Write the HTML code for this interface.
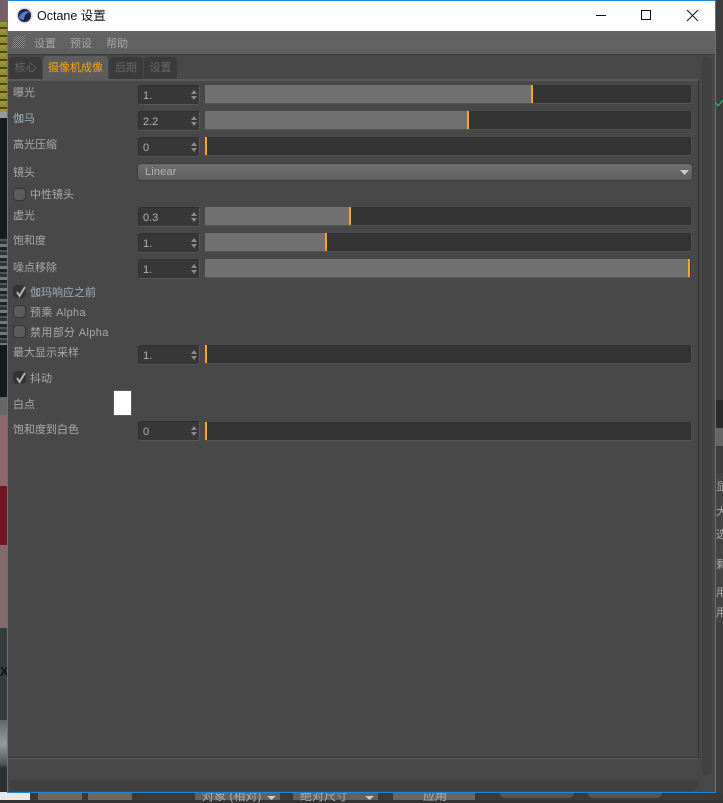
<!DOCTYPE html>
<html lang="zh"><head><meta charset="utf-8"><title>Octane 设置</title>
<style>
html,body{margin:0;padding:0;background:#333}
body{width:723px;height:800px;position:relative;overflow:hidden;font:11px/14px "Liberation Sans","Noto Sans CJK SC",sans-serif;color:#aaa}
div,span{position:absolute;box-sizing:border-box;white-space:nowrap}
svg{position:absolute;overflow:visible}
.l{left:13px;height:16px;line-height:16px}
.f{left:138px;width:62px;height:20px;background:#373737;border:1px solid #2f2f2f;border-right-color:#585858;border-bottom-color:#585858;border-radius:3px;padding-left:4px;line-height:20px;color:#adb4b8}
.f:after{content:"";position:absolute;right:2px;top:4px;width:0;height:0;border:3px solid transparent;border-bottom:4px solid #8a8a8a;border-top:0}
.f:before{content:"";position:absolute;right:2px;top:10px;width:0;height:0;border:3px solid transparent;border-top:4px solid #8a8a8a;border-bottom:0}
.s{left:205px;width:487px;height:19px;background:#333;border-radius:2px;border-right:1px solid #4f4f4f;border-bottom:1px solid #555}
.b{left:0;top:0;height:18px;background:#717171}
.m{top:0;width:2px;height:18px;background:#f5a81c}
.c{left:13px;width:13px;height:13px;border-radius:4px;background:#5c5c5c;border:1px solid #353535}
.c.k{background:#333}
.c svg{left:1px;top:0}
.t{top:57px;height:22px;background:#3b3b3b;border-radius:4px 4px 0 0;color:#666;line-height:23px;text-align:center}
.p{left:30px;height:16px;line-height:16px}
.a{letter-spacing:.35px}
.u{color:#b0b0b0;top:789px;height:14px;line-height:14px;font-size:12px;text-align:center}
</style></head><body>

<!-- background behind the window -->
<div style="left:0;top:0;width:7px;height:22px;background:#7a5c66"></div>
<div style="left:0;top:22px;width:7px;height:90px;background:repeating-linear-gradient(0deg,#8f9a30 0 3px,#7a2c2c 3px 5px,#8a8f34 5px 8px)"></div>
<div style="left:0;top:112px;width:7px;height:6px;background:#999"></div>
<div style="left:0;top:118px;width:7px;height:120px;background:#1a1a1a"></div>
<div style="left:0;top:238px;width:7px;height:119px;background:repeating-linear-gradient(0deg,#777 0 3px,#333 3px 6px,#555 6px 8px,#222 8px 11px)"></div>
<div style="left:0;top:345px;width:7px;height:52px;background:#191919"></div>
<div style="left:0;top:397px;width:7px;height:18px;background:#666"></div>
<div style="left:0;top:415px;width:7px;height:71px;background:#8c6a6a"></div>
<div style="left:0;top:486px;width:7px;height:59px;background:#6d1a1e"></div>
<div style="left:0;top:545px;width:7px;height:83px;background:#866a68"></div>
<div style="left:0;top:628px;width:7px;height:92px;background:#3a3a3a"></div>
<div style="left:0;top:664px;font:bold 13px 'Liberation Sans',sans-serif;color:#111">X</div>
<div style="left:0;top:720px;width:7px;height:80px;background:linear-gradient(#666,#999 30%,#555 55%,#2e2e2e 60%)"></div>
<div style="left:716px;top:0;width:7px;height:800px;background:#3d3d3d"></div>
<div style="left:716px;top:400px;width:7px;height:30px;background:#2a2a2a"></div>
<div style="left:716px;top:428px;width:7px;height:18px;background:#666"></div>
<div style="left:716px;top:473px;width:7px;height:150px;background:#444"></div>
<div style="left:716px;top:480px;color:#aaa">显</div>
<div style="left:716px;top:505px;color:#aaa">大</div>
<div style="left:716px;top:528px;color:#aaa">选</div>
<div style="left:716px;top:558px;color:#aaa">剩</div>
<div style="left:716px;top:586px;color:#aaa">用</div>
<div style="left:716px;top:606px;color:#aaa">用</div>
<svg style="left:716px;top:100px" width="7" height="7"><path d="M0 3L2 6L7 0" fill="none" stroke="#2fbf71" stroke-width="1"/></svg>
<div style="left:0;top:793px;width:723px;height:7px;background:#3a3a3a"></div>
<div style="left:0;top:792px;width:30px;height:8px;background:#e8e8e8"></div>
<div style="left:38px;top:793px;width:44px;height:7px;background:#6a6a60"></div>
<div style="left:88px;top:793px;width:44px;height:7px;background:#6a6a60"></div>
<div style="left:195px;top:793px;width:85px;height:7px;background:#616161"></div>
<div style="left:293px;top:793px;width:85px;height:7px;background:#616161"></div>
<div style="left:393px;top:793px;width:82px;height:7px;background:#666"></div>
<div style="left:500px;top:793px;width:74px;height:5px;background:#555;border-radius:0 0 6px 6px"></div>
<div style="left:588px;top:793px;width:74px;height:5px;background:#555;border-radius:0 0 6px 6px"></div>
<div class="u" style="left:202px">对象 (相对)</div>
<div class="u" style="left:300px">绝对尺寸</div>
<div class="u" style="left:423px">应用</div>
<svg style="left:267px;top:796px" width="80" height="4"><path d="M0 0H9L4.500 4Z" fill="#ccc"/></svg>
<svg style="left:365px;top:796px" width="9" height="4"><path d="M0 0H9L4.500 4Z" fill="#ccc"/></svg>

<!-- window -->
<div style="left:7px;top:0;width:709px;height:793px;background:#484848;border:1px solid #1c86dc;overflow:hidden"></div>
<div style="left:8px;top:1px;width:707px;height:30px;background:#fff"></div>
<svg style="left:16px;top:7px" width="17" height="17" viewBox="0 0 17 17"><circle cx="8.500" cy="8.500" r="8" fill="#d8d8de"/><circle cx="8.500" cy="8.500" r="6.500" fill="#1a2240"/><path d="M3 10C5 5 10 3 14 5C10 6 8 9 8 13C6 13 4 12 3 10Z" fill="#5a78c8"/></svg>
<div style="left:37px;top:8px;font-size:12.5px;line-height:17px;color:#111">Octane 设置</div>
<svg style="left:596px;top:9px" width="110" height="14"><path d="M0 6.500H10" stroke="#111" fill="none"/><rect x="45.500" y="1.500" width="9" height="9" fill="none" stroke="#111"/><path d="M91 1L102 12M102 1L91 12" stroke="#111" fill="none"/></svg>

<div style="left:8px;top:31px;width:707px;height:23px;background:linear-gradient(#646464,#5f5f5f)"></div>
<div style="left:8px;top:54px;width:707px;height:1px;background:#3a3a3a"></div>
<div style="left:13px;top:36px;width:12px;height:12px;background:repeating-conic-gradient(#999 0 25%,#444 0 50%) 0 0/2px 2px"></div>
<div style="left:34px;top:36px;line-height:16px;color:#a4a4a4">设置</div>
<div style="left:70px;top:36px;line-height:16px;color:#a4a4a4">预设</div>
<div style="left:106px;top:36px;line-height:16px;color:#a4a4a4">帮助</div>

<!-- panels -->
<div style="left:702px;top:57px;width:10px;height:718px;background:#414141;border-radius:5px"></div>
<div style="left:9px;top:780px;width:688px;height:11px;background:#414141;border-radius:0 0 5px 5px"></div>
<div style="left:8px;top:79px;width:691px;height:680px;background:#484848;border-top:2px solid #5a5a5a;border-right:1px solid #333;border-bottom:2px solid #5f5f5f"></div>
<div style="left:8px;top:757px;width:691px;height:1px;background:#333"></div>

<div class="t" style="left:9px;width:33px">核心</div>
<div class="t" style="left:43px;width:65px;top:56px;height:24px;background:#5c5c5c;color:#f3a21c;line-height:25px">摄像机成像</div>
<div class="t" style="left:109px;width:34px">后期</div>
<div class="t" style="left:144px;width:33px">设置</div>

<!-- rows -->
<div class="l" style="top:85px">曝光</div>
<div class="f" style="top:85px">1.</div>
<div class="s" style="top:85px"><div class="b" style="width:326px"></div><div class="m" style="left:326px"></div></div>

<div class="l" style="top:111px;color:#9fb4c8">伽马</div>
<div class="f" style="top:111px">2.2</div>
<div class="s" style="top:111px"><div class="b" style="width:262px"></div><div class="m" style="left:262px"></div></div>

<div class="l" style="top:137px">高光压缩</div>
<div class="f" style="top:137px">0</div>
<div class="s" style="top:137px"><div class="m" style="left:0"></div></div>

<div class="l" style="top:165px">镜头</div>
<div style="left:137px;top:163px;width:556px;height:18px;background:linear-gradient(#6f6f6f,#5f5f5f);border-radius:4px;border:1px solid #3c3c3c;padding-left:7px;line-height:16px;color:#b4b4b4;letter-spacing:.15px">Linear</div>
<svg style="left:680px;top:170px" width="9" height="5"><path d="M0 0H9L4.500 5Z" fill="#c8c8c8"/></svg>

<div class="c" style="top:188px"></div>
<div class="p" style="top:187px">中性镜头</div>

<div class="l" style="top:208px">虚光</div>
<div class="f" style="top:207px">0.3</div>
<div class="s" style="top:207px"><div class="b" style="width:144px"></div><div class="m" style="left:144px"></div></div>

<div class="l" style="top:233px">饱和度</div>
<div class="f" style="top:233px">1.</div>
<div class="s" style="top:233px"><div class="b" style="width:120px"></div><div class="m" style="left:120px"></div></div>

<div class="l" style="top:260px">噪点移除</div>
<div class="f" style="top:259px">1.</div>
<div class="s" style="top:259px"><div class="b" style="width:483px"></div><div class="m" style="left:483px"></div></div>

<div class="c k" style="top:285px"><svg width="12" height="12"><path d="M2 6L4.500 10L10 1" fill="none" stroke="#bbb" stroke-width="1.800"/></svg></div>
<div class="p" style="top:285px;color:#a0b0bc">伽玛响应之前</div>
<div class="c" style="top:305px"></div>
<div class="p a" style="top:305px">预乘 Alpha</div>
<div class="c" style="top:325px"></div>
<div class="p a" style="top:325px">禁用部分 Alpha</div>

<div class="l" style="top:345px">最大显示采样</div>
<div class="f" style="top:345px">1.</div>
<div class="s" style="top:345px"><div class="m" style="left:0"></div></div>

<div class="c k" style="top:371px"><svg width="12" height="12"><path d="M2 6L4.500 10L10 1" fill="none" stroke="#bbb" stroke-width="1.800"/></svg></div>
<div class="p" style="top:371px">抖动</div>

<div class="l" style="top:397px">白点</div>
<div style="left:113px;top:390px;width:19px;height:26px;background:#fff;border:1px solid #5a5a5a"></div>

<div class="l" style="top:422px">饱和度到白色</div>
<div class="f" style="top:421px">0</div>
<div class="s" style="top:422px"><div class="m" style="left:0"></div></div>

</body></html>
